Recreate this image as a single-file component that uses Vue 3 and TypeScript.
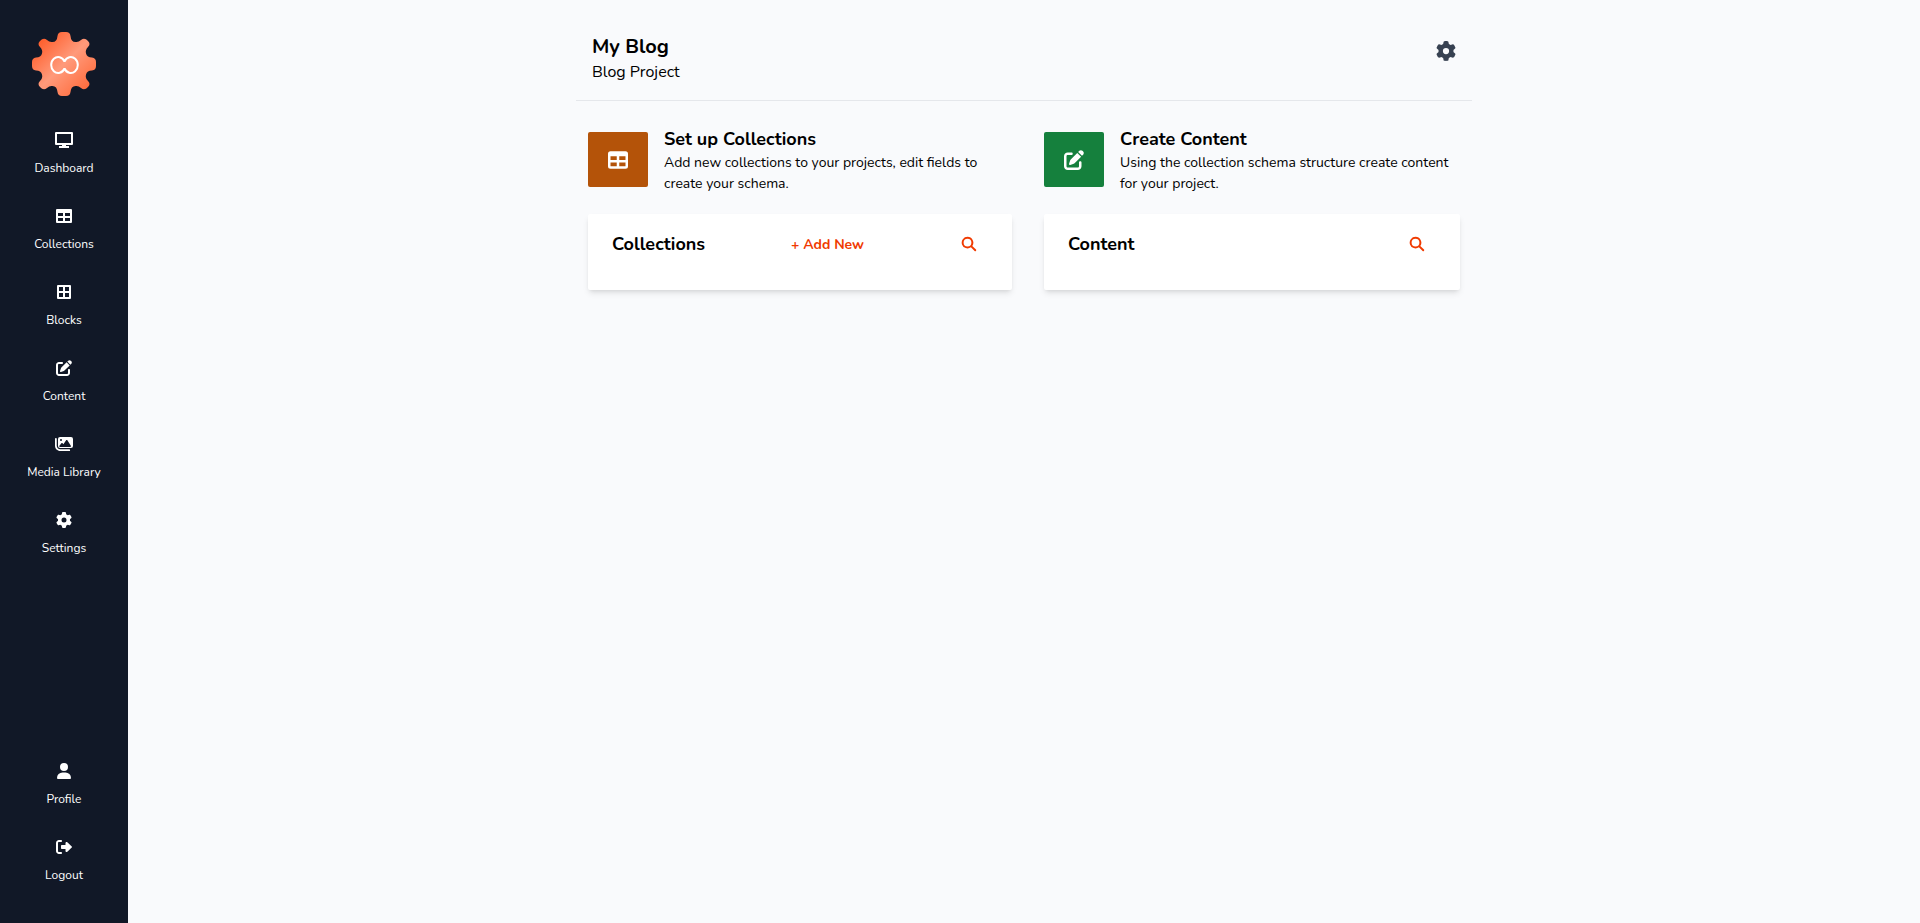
<script setup lang="ts">
interface NavItem {
  label: string
  icon: string
  size: number
}

const icons: Record<string, { box: string; path: string }> = {
  monitor: {
    box: '0 0 18 18',
    path: 'M1 1h16a1 1 0 0 1 1 1v11a1 1 0 0 1-1 1h-6v1h3v2H4v-2h3v-1H1a1 1 0 0 1-1-1V2a1 1 0 0 1 1-1zM2 3v9h14V3z',
  },
  table: {
    box: '0 0 512 512',
    path: 'M64 32h384a64 64 0 0 1 64 64v320a64 64 0 0 1-64 64H64a64 64 0 0 1-64-64V96a64 64 0 0 1 64-64zM64 160v96h160v-96zM288 160v96h160v-96zM64 320v96h160v-96zM288 320v96h160v-96z',
  },
  tableSmall: {
    box: '0 0 16 16',
    path: 'M1 1h14a1 1 0 0 1 1 1v12a1 1 0 0 1-1 1H1a1 1 0 0 1-1-1V2a1 1 0 0 1 1-1zM2 5v3h5V5zM9 5v3h5V5zM2 10v3h5v-3zM9 10v3h5v-3z',
  },
  blocks: {
    box: '0 0 16 16',
    path: 'M2 1h12a1 1 0 0 1 1 1v12a1 1 0 0 1-1 1H2a1 1 0 0 1-1-1V2a1 1 0 0 1 1-1zM3 3v4h4V3zM9 3v4h4V3zM3 9v4h4V9zM9 9v4h4V9z',
  },
  edit: {
    box: '0 0 512 512',
    path: 'M471.6 21.7c-21.9-21.9-57.3-21.9-79.2 0L362.3 51.7l97.9 97.9 30.1-30.1c21.9-21.9 21.9-57.3 0-79.2L471.6 21.7zm-299.2 220c-6.1 6.1-10.8 13.6-13.5 21.9l-29.6 88.8c-2.9 8.6-.6 18.1 5.8 24.6s15.9 8.7 24.6 5.8l88.8-29.6c8.2-2.7 15.7-7.4 21.9-13.5L437.7 172.3 339.7 74.3 172.4 241.7zM96 64C43 64 0 107 0 160V416c0 53 43 96 96 96H352c53 0 96-43 96-96V320c0-17.7-14.3-32-32-32s-32 14.3-32 32v96c0 17.7-14.3 32-32 32H96c-17.7 0-32-14.3-32-32V160c0-17.7 14.3-32 32-32h96c17.7 0 32-14.3 32-32s-14.3-32-32-32H96z',
  },
  images: {
    box: '0 0 576 576',
    path: 'M160 64h352a64 64 0 0 1 64 64v224a64 64 0 0 1-64 64H160a64 64 0 0 1-64-64V128a64 64 0 0 1 64-64zM396 171c-9-13-31-13-40 0l-87 127-27-33c-9-12-28-12-37 0l-64 80c-13 16-1 39 18 39h328c20 0 32-22 20-39zM192 128a32 32 0 1 0 0 64 32 32 0 1 0 0-64zM56 120a28 28 0 0 0-56 0v224c0 92 76 168 168 168h288a28 28 0 0 0 0-56H168c-62 0-112-50-112-112z',
  },
  gear: {
    box: '0 0 512 512',
    path: 'M495.9 166.6c3.2 8.7 .5 18.4-6.4 24.6l-43.3 39.4c1.1 8.3 1.7 16.8 1.7 25.4s-.6 17.1-1.7 25.4l43.3 39.4c6.9 6.2 9.6 15.9 6.4 24.6c-4.4 11.9-9.7 23.3-15.8 34.3l-4.7 8.1c-6.6 11-14 21.4-22.1 31.2c-5.9 7.2-15.7 9.6-24.5 6.8l-55.7-17.7c-13.4 10.3-28.2 18.9-44 25.4l-12.5 57.1c-2 9.1-9 16.3-18.2 17.8c-13.8 2.3-28 3.5-42.5 3.5s-28.7-1.2-42.5-3.5c-9.2-1.5-16.2-8.7-18.2-17.8l-12.5-57.1c-15.8-6.5-30.6-15.1-44-25.4L83.1 425.9c-8.8 2.8-18.6 .3-24.5-6.8c-8.1-9.8-15.5-20.2-22.1-31.2l-4.7-8.1c-6.1-11-11.4-22.4-15.8-34.3c-3.2-8.7-.5-18.4 6.4-24.6l43.3-39.4C64.6 273.1 64 264.6 64 256s.6-17.1 1.7-25.4L22.4 191.2c-6.9-6.2-9.6-15.9-6.4-24.6c4.4-11.9 9.7-23.3 15.8-34.3l4.7-8.1c6.6-11 14-21.4 22.1-31.2c5.9-7.2 15.7-9.6 24.5-6.8l55.7 17.7c13.4-10.3 28.2-18.9 44-25.4l12.5-57.1c2-9.1 9-16.3 18.2-17.8C227.3 1.2 241.5 0 256 0s28.7 1.2 42.5 3.5c9.2 1.5 16.2 8.7 18.2 17.8l12.5 57.1c15.8 6.5 30.6 15.1 44 25.4l55.7-17.7c8.8-2.8 18.6-.3 24.5 6.8c8.1 9.8 15.5 20.2 22.1 31.2l4.7 8.1c6.1 11 11.4 22.4 15.8 34.3zM256 336a80 80 0 1 0 0-160 80 80 0 1 0 0 160z',
  },
  user: {
    box: '0 0 16 16',
    path: 'M8 0a4 4 0 1 0 0 8 4 4 0 1 0 0-8zM6.5 9.5h3A5.5 5.5 0 0 1 15 15a1 1 0 0 1-1 1H2a1 1 0 0 1-1-1 5.5 5.5 0 0 1 5.5-5.5z',
  },
  logout: {
    box: '0 0 512 512',
    path: 'M160 96c18 0 32-14 32-32s-14-32-32-32H96C43 32 0 75 0 128v256c0 53 43 96 96 96h64c18 0 32-14 32-32s-14-32-32-32H96c-18 0-32-14-32-32V128c0-18 14-32 32-32zM504 273c5-5 8-11 8-17s-3-13-8-17L362 105c-6-6-15-9-23-9-19 0-35 16-35 35v61H192c-18 0-32 14-32 32v64c0 18 14 32 32 32h112v61c0 19 16 35 35 35 8 0 17-3 23-9z',
  },
  search: {
    box: '0 0 16 16',
    path: 'M6.5.8a5.8 5.8 0 1 0 3.4 10.5l3.700 3.700a1 1 0 0 0 1.400-1.400l-3.700-3.700A5.800 5.800 0 0 0 6.500.8zM6.500 2.700a3.900 3.900 0 1 1 0 7.800 3.900 3.900 0 0 1 0-7.800z',
  },
}

const mainNav: NavItem[] = [
  { label: 'Dashboard', icon: 'monitor', size: 18 },
  { label: 'Collections', icon: 'tableSmall', size: 16 },
  { label: 'Blocks', icon: 'blocks', size: 16 },
  { label: 'Content', icon: 'edit', size: 16 },
  { label: 'Media Library', icon: 'images', size: 18 },
  { label: 'Settings', icon: 'gear', size: 16 },
]

const accountNav: NavItem[] = [
  { label: 'Profile', icon: 'user', size: 16 },
  { label: 'Logout', icon: 'logout', size: 16 },
]

const panels = [
  {
    title: 'Set up Collections',
    text: 'Add new collections to your projects, edit fields to create your schema.',
    icon: 'table',
    tone: 'amber',
    card: 'Collections',
    canAdd: true,
  },
  {
    title: 'Create Content',
    text: 'Using the collection schema structure create content for your project.',
    icon: 'edit',
    tone: 'green',
    card: 'Content',
    canAdd: false,
  },
]
</script>

<template>
  <div class="shell">
    <aside class="sidebar">
      <a class="logo" href="#" aria-label="Home">
        <svg width="64" height="64" viewBox="0 0 64 64">
          <defs>
            <linearGradient id="logo-fill" x1="0.1" y1="0.1" x2="0.9" y2="0.9">
              <stop offset="0" stop-color="#ff5a26" />
              <stop offset="0.5" stop-color="#ff9a7b" />
              <stop offset="1" stop-color="#ff6a3a" />
            </linearGradient>
          </defs>
          <path
            fill="url(#logo-fill)"
            d="M30 0h4q4 0 4.500 4 .5 6 5 6 3 .5 5.500-2 3.500-3 7 1 3 3 0 6-3 3-2 6.500 1 4 6 4 4 .5 4 4.500v4q0 4-4 4.500-5 0-6 4-1 3.500 2 6.500 3 3 0 6-3.500 4-7 1-2.500-2.500-5.500-2-4.500 0-5 6-.5 4-4.500 4h-4q-4 0-4.500-4-.5-6-5-6-3-.5-5.500 2-3.500 3-7-1-3-3 0-6 3-3 2-6.500-1-4-6-4-4-.5-4-4.500v-4q0-4 4-4.500 5 0 6-4 1-3.500-2-6.500-3-3 0-6 3.500-4 7-1 2.500 2.500 5.500 2 4.500 0 5-6Q26 0 30 0z"
          />
          <path
            d="M32.500 29.500A7 8 0 1 0 32.500 36.500M32.500 29.500A7 8 0 1 1 32.500 36.500"
            fill="none"
            stroke="#fff"
            stroke-width="2"
          />
        </svg>
      </a>
      <nav class="nav" aria-label="Main">
        <a v-for="item in mainNav" :key="item.label" class="nav-item" href="#">
          <span class="nav-icon">
            <svg :width="item.size" :height="item.size" :viewBox="icons[item.icon].box" aria-hidden="true">
              <path :d="icons[item.icon].path" fill="currentColor" fill-rule="evenodd" />
            </svg>
          </span>
          <span>{{ item.label }}</span>
        </a>
      </nav>
      <nav class="nav account" aria-label="Account">
        <a v-for="item in accountNav" :key="item.label" class="nav-item" href="#">
          <span class="nav-icon">
            <svg :width="item.size" :height="item.size" :viewBox="icons[item.icon].box" aria-hidden="true">
              <path :d="icons[item.icon].path" fill="currentColor" fill-rule="evenodd" />
            </svg>
          </span>
          <span>{{ item.label }}</span>
        </a>
      </nav>
    </aside>

    <main class="main">
      <div class="content">
        <header class="header">
          <div>
            <h1>My Blog</h1>
            <p>Blog Project</p>
          </div>
          <button class="icon-button settings" type="button" aria-label="Project settings">
            <svg width="20" height="20" :viewBox="icons.gear.box" aria-hidden="true">
              <path :d="icons.gear.path" fill="currentColor" fill-rule="evenodd" />
            </svg>
          </button>
        </header>

        <div class="columns">
          <section v-for="panel in panels" :key="panel.title" class="column">
            <div class="intro">
              <div class="tile" :class="panel.tone">
                <svg width="20" height="20" :viewBox="icons[panel.icon].box" aria-hidden="true">
                  <path :d="icons[panel.icon].path" fill="currentColor" fill-rule="evenodd" />
                </svg>
              </div>
              <div class="intro-text">
                <h2>{{ panel.title }}</h2>
                <p>{{ panel.text }}</p>
              </div>
            </div>
            <div class="card">
              <h3>{{ panel.card }}</h3>
              <button v-if="panel.canAdd" class="add" type="button">+ Add New</button>
              <button class="icon-button search" type="button" :aria-label="'Search ' + panel.card">
                <svg width="16" height="16" :viewBox="icons.search.box" aria-hidden="true">
                  <path :d="icons.search.path" fill="currentColor" fill-rule="evenodd" />
                </svg>
              </button>
            </div>
          </section>
        </div>
      </div>
    </main>
  </div>
</template>

<style>
body {
  margin: 0;
  background: #f9fafc;
}
</style>

<style scoped>
.shell {
  display: flex;
  min-height: 100vh;
  font-family: Nunito, "Open Sans", "Noto Sans", sans-serif;
  color: #000;
}
.sidebar {
  box-sizing: border-box;
  display: flex;
  flex: 0 0 128px;
  flex-direction: column;
  padding: 32px 0 28px;
  background: #111827;
}
.logo {
  display: flex;
  justify-content: center;
  margin-bottom: 16px;
}
.nav {
  display: flex;
  flex-direction: column;
}
.account {
  margin-top: auto;
}
.nav-item {
  box-sizing: border-box;
  display: flex;
  flex-direction: column;
  align-items: center;
  gap: 10px;
  height: 76px;
  padding-top: 18px;
  color: #fff;
  font-size: 12px;
  line-height: 16px;
  text-decoration: none;
}
.nav-icon {
  display: flex;
  align-items: center;
  justify-content: center;
  height: 20px;
}
.main {
  flex: 1;
  min-width: 0;
}
.content {
  max-width: 896px;
  margin: 0 auto;
}
h1,
h2,
h3,
p {
  margin: 0;
}
h1,
h2,
h3 {
  font-weight: 700;
}
.header {
  display: flex;
  align-items: flex-start;
  justify-content: space-between;
  padding: 32px 16px 18px;
  border-bottom: 1px solid #e5e7eb;
}
h1 {
  font-size: 20px;
  line-height: 30px;
}
.header p {
  font-size: 16px;
  line-height: 20px;
}
.icon-button {
  display: flex;
  justify-content: center;
  padding: 0;
  border: 0;
  background: none;
  cursor: pointer;
}
.settings {
  align-items: center;
  height: 38px;
  color: #374151;
}
.columns {
  display: grid;
  grid-template-columns: 1fr 1fr;
  padding-top: 27px;
}
.column {
  min-width: 0;
  padding: 0 12px;
}
.column + .column {
  padding-left: 20px;
}
.intro {
  display: flex;
  align-items: flex-start;
  gap: 16px;
}
.tile {
  display: flex;
  flex: 0 0 60px;
  align-items: center;
  justify-content: center;
  height: 55px;
  margin-top: 4px;
  border-radius: 2px;
  color: #fff;
}
.amber {
  background: #b45309;
}
.green {
  background: #15803d;
}
h2 {
  margin-bottom: 2px;
  font-size: 18px;
  line-height: 22px;
}
.intro-text p {
  font-size: 14px;
  line-height: 21px;
}
.card {
  display: flex;
  align-items: flex-start;
  justify-content: space-between;
  box-sizing: border-box;
  min-height: 76px;
  margin-top: 20px;
  padding: 16px 24px;
  border-radius: 2px;
  background: #fff;
  box-shadow: 0 4px 6px -1px rgba(0, 0, 0, 0.1), 0 2px 4px -2px rgba(0, 0, 0, 0.1);
}
h3 {
  font-size: 18px;
  line-height: 28px;
}
.add {
  padding: 0;
  border: 0;
  background: none;
  color: #f03a00;
  font: inherit;
  font-size: 14px;
  font-weight: 700;
  line-height: 30px;
  cursor: pointer;
}
.search {
  align-items: center;
  width: 38px;
  height: 28px;
  color: #f03a00;
}
</style>
